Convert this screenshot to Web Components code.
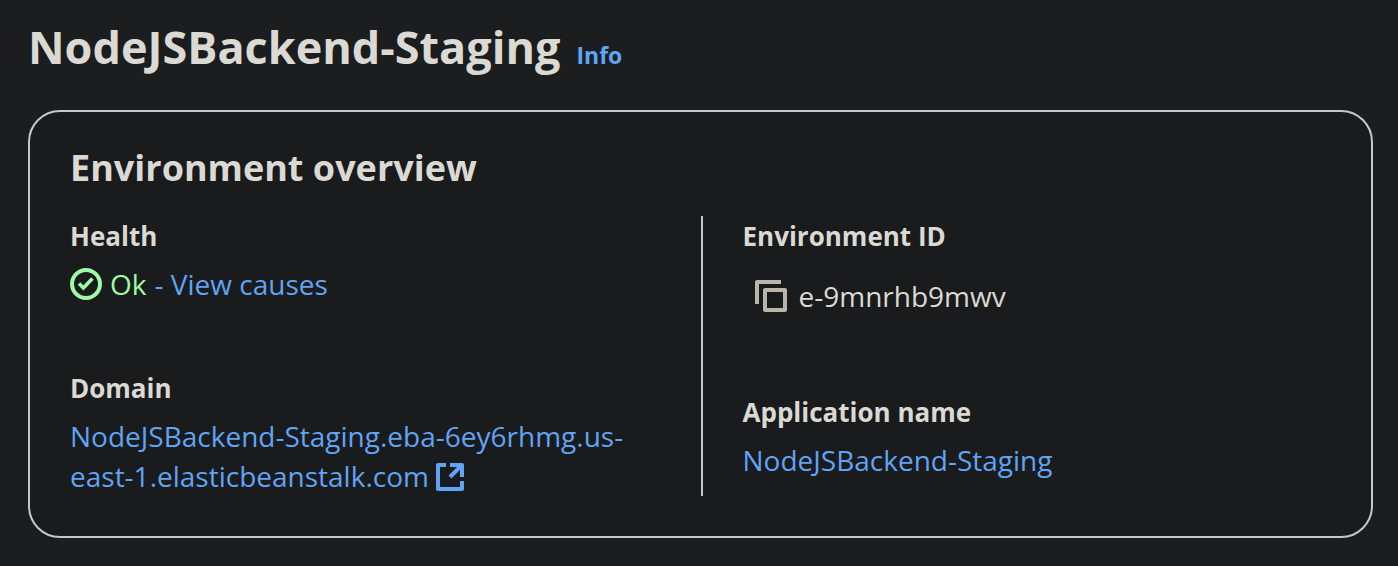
<!DOCTYPE html>
<html lang="en">
<head>
<meta charset="utf-8">
<title>NodeJSBackend-Staging</title>
<style>
  body {
    margin: 0;
    background: #1b1d1e;
    color: #dad9d3;
    font: 28px/40px "Open Sans", "Noto Sans", sans-serif;
    --link: #5fa4f5;
    --success: #9dfaa6;
    --line: #c6c6cd;
    --panel: #1a1b1c;
    --icon: #b9b5ab;
  }
</style>
</head>
<body>
<environment-page></environment-page>

<script>
const define = (name, html) => {
  const template = document.createElement('template');
  template.innerHTML = html;
  customElements.define(name, class extends HTMLElement {
    constructor() {
      super();
      this.attachShadow({ mode: 'open' }).append(template.content.cloneNode(true));
    }
  });
};

define('page-header', `
  <style>
    :host { display: flex; align-items: baseline; gap: 16px; }
    h1 { margin: 0; font-size: 45px; font-weight: 700; line-height: 60px; }
    ::slotted(a) { color: var(--link); font-size: 23px; font-weight: 700; text-decoration: none; }
  </style>
  <h1><slot></slot></h1>
  <slot name="info"></slot>
`);

define('overview-card', `
  <style>
    :host { display: block; border: 2px solid var(--line); border-radius: 32px;
            background: var(--panel); padding: 32px 40px 40px; }
    h2 { margin: 0 0 24px; font-size: 36px; font-weight: 700; line-height: 48px; }
    .columns { display: grid; grid-template-columns: 1fr 1fr; }
  </style>
  <section aria-labelledby="title">
    <h2 id="title"><slot name="title"></slot></h2>
    <div class="columns"><slot></slot></div>
  </section>
`);

define('field-column', `
  <style>
    :host { display: flex; flex-direction: column; gap: 64px; min-width: 0; padding-right: 40px; }
    :host([divided]) { border-left: 2px solid var(--line); padding: 0 0 0 40px; }
  </style>
  <slot></slot>
`);

define('field-pair', `
  <style>
    :host { display: flex; flex-direction: column; gap: 8px; }
    .label { font-size: 26px; font-weight: 700; }
  </style>
  <div class="label"><slot name="label"></slot></div>
  <div><slot></slot></div>
`);

define('health-status', `
  <style>
    :host { display: flex; align-items: center; gap: 8px; color: var(--success); }
    svg { display: block; }
    a { color: var(--link); text-decoration: none; }
  </style>
  <svg width="32" height="32" viewBox="0 0 16 16" fill="none" stroke="currentColor" stroke-width="2" aria-hidden="true">
    <circle cx="8" cy="8" r="7"/>
    <path d="m4.5 7.8 2.2 2.2 4.5-4.8" stroke-width="1.8"/>
  </svg>
  <span><slot></slot></span>
  <a href="#causes">- View causes</a>
`);

define('copy-value', `
  <style>
    :host { display: flex; align-items: center; gap: 12px; padding: 12px 0 12px 12px; }
    button { display: block; border: 0; padding: 0; background: none; color: var(--icon); cursor: pointer; }
    svg { display: block; }
  </style>
  <button type="button" aria-label="Copy environment ID">
    <svg width="32" height="32" viewBox="0 0 32 32" fill="none" stroke="currentColor" stroke-width="4" stroke-linejoin="round" aria-hidden="true">
      <path d="M2 24V2h24"/>
      <path d="M10 10h20v20H10z"/>
    </svg>
  </button>
  <span><slot></slot></span>
`);

define('text-link', `
  <style>
    a { color: var(--link); text-decoration: none; }
    svg { display: none; vertical-align: -4px; }
    :host([external]) svg { display: inline-block; }
  </style>
  <a href="#open"><slot></slot> <svg width="28" height="28" viewBox="0 0 28 28" fill="none" stroke="currentColor" stroke-width="4" aria-hidden="true">
    <path d="M10 2H2v24h24v-8" stroke-linejoin="round"/>
    <path d="M14 2h12v12" stroke-linejoin="round"/>
    <path d="M26 2 14 14"/>
  </svg></a>
`);

define('environment-page', `
  <style>
    :host { display: flex; flex-direction: column; gap: 33px; padding: 17px 25px 28px 28px; }
  </style>
  <page-header>NodeJSBackend-Staging<a slot="info" href="#info">Info</a></page-header>
  <overview-card>
    <span slot="title">Environment overview</span>
    <field-column>
      <field-pair><span slot="label">Health</span><health-status>Ok</health-status></field-pair>
      <field-pair><span slot="label">Domain</span><text-link external>NodeJSBackend-Staging.eba-6ey6rhmg.us-east-1.elasticbeanstalk.com</text-link></field-pair>
    </field-column>
    <field-column divided>
      <field-pair><span slot="label">Environment ID</span><copy-value>e-9mnrhb9mwv</copy-value></field-pair>
      <field-pair><span slot="label">Application name</span><text-link>NodeJSBackend-Staging</text-link></field-pair>
    </field-column>
  </overview-card>
`);
</script>
</body>
</html>
